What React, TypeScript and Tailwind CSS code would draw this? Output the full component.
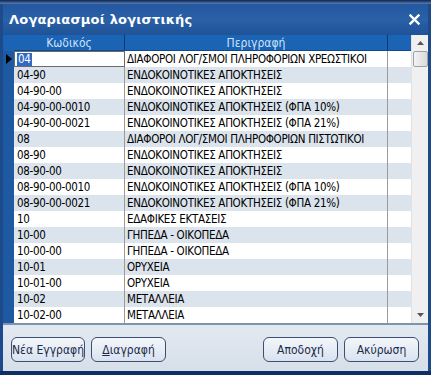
import React from "react";

const rows: [string, string][] = [
  ["04", "ΔΙΑΦΟΡΟΙ ΛΟΓ/ΣΜΟΙ ΠΛΗΡΟΦΟΡΙΩΝ ΧΡΕΩΣΤΙΚΟΙ"],
  ["04-90", "ΕΝΔΟΚΟΙΝΟΤΙΚΕΣ ΑΠΟΚΤΗΣΕΙΣ"],
  ["04-90-00", "ΕΝΔΟΚΟΙΝΟΤΙΚΕΣ ΑΠΟΚΤΗΣΕΙΣ"],
  ["04-90-00-0010", "ΕΝΔΟΚΟΙΝΟΤΙΚΕΣ ΑΠΟΚΤΗΣΕΙΣ (ΦΠΑ 10%)"],
  ["04-90-00-0021", "ΕΝΔΟΚΟΙΝΟΤΙΚΕΣ ΑΠΟΚΤΗΣΕΙΣ (ΦΠΑ 21%)"],
  ["08", "ΔΙΑΦΟΡΟΙ ΛΟΓ/ΣΜΟΙ ΠΛΗΡΟΦΟΡΙΩΝ ΠΙΣΤΩΤΙΚΟΙ"],
  ["08-90", "ΕΝΔΟΚΟΙΝΟΤΙΚΕΣ ΑΠΟΚΤΗΣΕΙΣ"],
  ["08-90-00", "ΕΝΔΟΚΟΙΝΟΤΙΚΕΣ ΑΠΟΚΤΗΣΕΙΣ"],
  ["08-90-00-0010", "ΕΝΔΟΚΟΙΝΟΤΙΚΕΣ ΑΠΟΚΤΗΣΕΙΣ (ΦΠΑ 10%)"],
  ["08-90-00-0021", "ΕΝΔΟΚΟΙΝΟΤΙΚΕΣ ΑΠΟΚΤΗΣΕΙΣ (ΦΠΑ 21%)"],
  ["10", "ΕΔΑΦΙΚΕΣ ΕΚΤΑΣΕΙΣ"],
  ["10-00", "ΓΗΠΕΔΑ - ΟΙΚΟΠΕΔΑ"],
  ["10-00-00", "ΓΗΠΕΔΑ - ΟΙΚΟΠΕΔΑ"],
  ["10-01", "ΟΡΥΧΕΙΑ"],
  ["10-01-00", "ΟΡΥΧΕΙΑ"],
  ["10-02", "ΜΕΤΑΛΛΕΙΑ"],
  ["10-02-00", "ΜΕΤΑΛΛΕΙΑ"],
];

const gridFont = {
  fontFamily: '"Liberation Sans Narrow", "DejaVu Sans Condensed", "Liberation Sans", sans-serif',
};

function Btn({ children, className = "" }: { children: React.ReactNode; className?: string }) {
  return (
    <div
      className={
        "h-[25px] flex items-center justify-center rounded-[6px] border border-[#3b4f70] bg-gradient-to-b from-[#f4f7fb] to-[#d9e2ee] text-[12px] text-[#1a2b4c] " +
        className
      }
      style={{ fontFamily: '"DejaVu Sans Condensed", "Liberation Sans", sans-serif' }}
    >
      {children}
    </div>
  );
}

export default function App() {
  return (
    <div className="w-[431px] h-[375px] bg-[#0e2f63] flex flex-col overflow-hidden">
      <div className="h-[4px] bg-gradient-to-b from-[#0a2656] to-[#5d7fb0]" />
      <div className="flex-1 flex flex-col border-l-[3px] border-r-[3px] border-[#1d4a8a]">
        {/* title */}
        <div className="h-[31px] flex items-center justify-between pl-[6px] pr-[8px] bg-gradient-to-b from-[#2358a0] via-[#2a60a6] to-[#1f5398]">
          <span
            className="text-white font-bold text-[13px] tracking-[0.2px]"
            style={{ fontFamily: '"DejaVu Sans", sans-serif' }}
          >
            Λογαριασμοί λογιστικής
          </span>
          <svg width="11" height="11" viewBox="0 0 11 11">
            <path d="M1.5 1.5 L9.5 9.5 M9.5 1.5 L1.5 9.5" stroke="white" strokeWidth="2.4" strokeLinecap="square" />
          </svg>
        </div>
        {/* grid */}
        <div className="h-[290px] flex bg-white border-b-2 border-[#7f93ad]" style={gridFont}>
          <div className="w-[11px] flex flex-col bg-[#1d5aa2]">
            <div className="h-[16px] bg-[#1b63b4]" />
            <div className="h-[16px] flex items-center justify-center">
              <svg width="6" height="10" viewBox="0 0 6 10">
                <path d="M0 0 L6 5 L0 10 Z" fill="#000" />
              </svg>
            </div>
          </div>
          <div className="flex-1 flex flex-col">
            <div className="h-[16px] flex bg-[#1b63b4] text-[#cfe2f7] text-[12px] leading-[16px] border-b border-[#0f4a8e]">
              <div className="w-[111px] text-center border-r border-[#0c3a70]">Κωδικός</div>
              <div className="w-[263px] text-center border-r border-[#0c3a70]">Περιγραφή</div>
              <div className="flex-1" />
            </div>
            {rows.map(([code, desc], i) => (
              <div
                key={code}
                className={
                  "h-[16px] flex text-[11.5px] leading-[16px] tracking-[-0.3px] text-black " +
                  (i % 2 === 1 ? "bg-[#dbe3ec]" : "bg-white")
                }
              >
                {i === 0 ? (
                  <div className="w-[111px] border border-[#6b6b6b] bg-white pl-[2px] flex items-center">
                    <span className="bg-[#316ac5] text-white leading-[13px] px-[1px]">{code}</span>
                  </div>
                ) : (
                  <div className="w-[111px] pl-[3px] border-r border-[#9a9a9a] whitespace-nowrap">{code}</div>
                )}
                <div className="w-[263px] pl-[2px] border-r border-[#9a9a9a] whitespace-nowrap overflow-hidden">
                  {desc}
                </div>
                <div className="flex-1" />
              </div>
            ))}
          </div>
          {/* scrollbar */}
          <div className="w-[17px] bg-[#f0f0f0] flex flex-col items-center border-l border-[#e2e2e2]">
            <div className="h-[16px] flex items-center justify-center">
              <svg width="7" height="4" viewBox="0 0 7 4">
                <path d="M0 4 L3.5 0 L7 4 Z" fill="#555" />
              </svg>
            </div>
            <div className="w-[15px] h-[16px] rounded-[2px] border border-[#9aa3ad] bg-gradient-to-r from-[#f3f3f3] to-[#dadada]" />
            <div className="flex-1" />
            <div className="h-[16px] flex items-center justify-center">
              <svg width="7" height="4" viewBox="0 0 7 4">
                <path d="M0 0 L3.5 4 L7 0 Z" fill="#555" />
              </svg>
            </div>
          </div>
        </div>
        {/* bottom panel */}
        <div className="flex-1 flex items-center pl-[8px] pr-[9px] pt-[3px] bg-gradient-to-b from-[#e3e9f1] to-[#d6dfe9]">
          <Btn className="w-[74px]">Νέα Εγγραφή</Btn>
          <Btn className="w-[75px] ml-[6px]">
            <span>
              <span className="underline">Δ</span>ιαγραφή
            </span>
          </Btn>
          <div className="flex-1" />
          <Btn className="w-[75px]">Αποδοχή</Btn>
          <Btn className="w-[75px] ml-[6px]">Ακύρωση</Btn>
        </div>
      </div>
      <div className="h-[4px] bg-[#0e2f63]" />
    </div>
  );
}
